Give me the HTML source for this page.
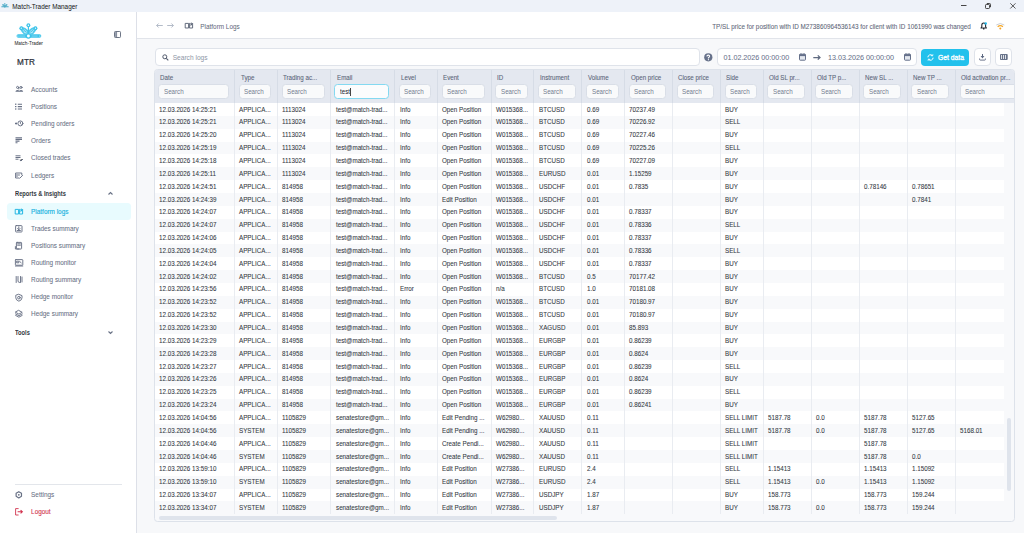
<!DOCTYPE html>
<html><head><meta charset="utf-8">
<style>
*{box-sizing:border-box;margin:0;padding:0}
html,body{width:1024px;height:533px;overflow:hidden;background:#f7f8fa;font-family:"Liberation Sans",sans-serif;color:#2a2f3a}
.abs{position:absolute}
#titlebar{position:absolute;left:0;top:0;width:1024px;height:12px;background:#eef2f9}
#ttext{position:absolute;left:12.3px;top:2.7px;font-size:6.4px;color:#151515;white-space:nowrap}
#sidebar{position:absolute;left:0;top:12px;width:137px;height:521px;background:#fff;border-right:1px solid #dde0e8}
.nav{position:absolute;left:31.1px;font-size:6.4px;color:#5b6477;white-space:nowrap;line-height:8px;margin-top:0.7px;-webkit-text-stroke:0.05px #5b6477}
.navi{position:absolute;left:15.8px;width:8.5px;height:8px}
.sec{position:absolute;left:15.4px;font-size:6.4px;transform:scaleX(0.895);transform-origin:0 0;font-weight:bold;color:#34373d;white-space:nowrap;line-height:8px}
#active{position:absolute;left:7.1px;top:190.8px;width:123.6px;height:16.9px;background:#e8fbfe;border-radius:3.5px}
#header{position:absolute;left:137px;top:12px;width:887px;height:26.5px;background:#fff;border-bottom:1px solid #e1e4ea}
.htext{position:absolute;font-size:6.4px;color:#5d6678;white-space:nowrap;line-height:8px}
.box{position:absolute;background:#fff;border:1px solid #dfe3ea;border-radius:4px}
#tbl{position:absolute;background:#f8f9fb;border:1px solid #dde2ea;border-radius:3.5px;overflow:hidden}
#thead{position:absolute;left:0;top:0;width:100%;background:#e4e8f0}
.th{position:absolute;top:0;height:100%}
.hl{position:absolute;left:6px;top:4.3px;font-size:6.8px;color:#5a6579;-webkit-text-stroke:0.08px #5a6579;white-space:nowrap;line-height:7px}
.hi{position:absolute;left:4.2px;top:14.6px;height:14.5px;background:#f9fafb;border:1px solid #d9dee7;border-radius:3.5px;font-size:6.9px;color:#737d90;padding-left:4.4px;line-height:12.5px;padding-top:0.9px;white-space:nowrap}
.hi.focus{border:1.3px solid #84d9f1;background:#fbfcfd;color:#20242c;margin-left:-0.6px;margin-top:-0.6px;height:15.5px;padding-left:4.7px}
.ph{display:inline-block;transform:scaleX(0.9);transform-origin:0 50%}
.hs{display:inline-block;transform:scaleX(0.91);transform-origin:0 50%}
.caret{position:absolute;left:15.1px;top:2.9px;width:0.7px;height:8.3px;background:#444}
.hvl{position:absolute;top:0;width:1px;height:100%;background:#d6dce6}
#tbody{position:absolute;left:0;width:100%;overflow:hidden}
.tr{position:absolute;left:0;width:849.7px;height:12.85px;background:#fff}
.tr.alt{background:#f8f9fb}
.td{position:absolute;top:2.5px;font-size:6.7px;color:#343944;white-space:nowrap;line-height:7.4px;transform:scaleX(0.935);transform-origin:0 0;-webkit-text-stroke:0.07px #343944}
.vl{position:absolute;top:0;width:1px;height:100%;background:#e9ecf1}
#gutter{position:absolute;width:12px;background:#f8f9fb}
#hthumb{position:absolute;height:4px;background:#dfe4ec;border-radius:2px}
#vthumb{position:absolute;width:4px;background:#dfe4ec;border-radius:2px}
svg{position:absolute;overflow:visible}
</style></head><body>
<div id="titlebar">
 <svg style="left:1.3px;top:3.4px" width="8" height="5" viewBox="0 0 26 17"><g fill="#4aa9c6"><path d="M3.3 5.2 Q3.2 3.2 5.4 3.4 Q9 4.2 11.6 6.6 L13.2 6.6 Q15.8 4.2 19.4 3.4 Q21.6 3.2 21.5 5.2 Q21 8.3 17.6 11.6 L7.2 11.6 Q3.8 8.3 3.3 5.2 Z" opacity="0.85"/><rect x="0.3" y="11.2" width="25.4" height="3.6" rx="1.8"/><circle cx="12.4" cy="13" r="2.8"/><circle cx="12.4" cy="2.3" r="2"/><rect x="11.7" y="3" width="1.4" height="6"/></g></svg>
 <div id="ttext">Match-Trader Manager</div>
 <svg style="left:961px;top:5px" width="6" height="1"><rect x="0" y="0" width="5.5" height="0.9" fill="#333"/></svg>
 <svg style="left:985px;top:2.5px" width="6" height="6" viewBox="0 0 6 6"><rect x="0.5" y="1.5" width="4" height="4" rx="0.8" fill="none" stroke="#333" stroke-width="0.9"/><path d="M1.8 0.5 H4.6 Q5.5 0.5 5.5 1.4 V4.2" fill="none" stroke="#333" stroke-width="0.9"/></svg>
 <svg style="left:1009.6px;top:2.5px" width="6" height="6" viewBox="0 0 6 6"><path d="M0.3 0.3 L5.5 5.5 M5.5 0.3 L0.3 5.5" stroke="#333" stroke-width="0.8"/></svg>
</div>
<div id="sidebar">
 <!-- logo crown -->
 <svg style="left:16px;top:10.5px" width="26" height="17" viewBox="0 0 26 17">
  <g fill="#3ec4ea">
   <path d="M3.6 5.8 Q5.5 9 8 11.4 H16.8 Q19.3 9 21.2 5.8 L19.4 3.6 Q15 4.6 12.4 7.4 Q9.8 4.6 5.4 3.6 Z" opacity="0.9"/>
   <rect x="0.5" y="11.2" width="24.8" height="3.6" rx="1.8"/>
   <circle cx="12.4" cy="13" r="2.7"/>
   <circle cx="12.4" cy="2.3" r="1.95"/>
   <rect x="11.8" y="3.5" width="1.2" height="8"/>
   <circle cx="5.3" cy="5.2" r="1.9"/><circle cx="19.5" cy="5.2" r="1.9"/>
  </g>
  <g fill="#fff">
   <circle cx="12.4" cy="13" r="1.45"/>
   <circle cx="12.4" cy="2.3" r="0.7"/>
   <circle cx="5.3" cy="5.2" r="0.6"/><circle cx="19.5" cy="5.2" r="0.6"/>
   <rect x="3.2" y="12.8" width="6" height="0.45" opacity="0.75"/>
   <rect x="15.6" y="12.8" width="6" height="0.45" opacity="0.75"/>
   <circle cx="1.9" cy="13" r="0.55"/><circle cx="23.9" cy="13" r="0.55"/>
  </g>
  <path d="M6.8 6.8 L9.6 10.4 M18 6.8 L15.2 10.4 M8.2 6.4 L11 8.8 M16.6 6.4 L13.8 8.8 M7.8 9 L11.2 10.2 M17 9 L13.6 10.2" stroke="#fff" stroke-width="0.5" fill="none" opacity="0.85"/>
 </svg>
 <div class="abs" style="left:14.4px;top:28.8px;font-size:4.7px;color:#333;-webkit-text-stroke:0.05px #333;white-space:nowrap;letter-spacing:0.05px">Match-Trader</div>
 <svg style="left:113.7px;top:18.5px" width="7" height="7" viewBox="0 0 7 7"><rect x="0.5" y="0.5" width="6" height="6" rx="0.8" fill="none" stroke="#5d6678" stroke-width="0.9"/><rect x="1" y="1" width="1.4" height="5" fill="#9aa2b1"/><path d="M2.6 0.8 V6.2" stroke="#5d6678" stroke-width="0.7"/></svg>
 <div class="abs" style="left:17.1px;top:46.1px;font-size:8.2px;color:#2b2f38;-webkit-text-stroke:0.2px #2b2f38;white-space:nowrap">MTR</div>
 <div id="active"></div>
 <svg style="left:15.4px;top:74.00px" width="8" height="8" viewBox="0 0 8 8"><circle cx="2.6" cy="1.4" r="1.05" stroke="#687185" stroke-width="0.95" fill="none" stroke-linecap="round" stroke-linejoin="round"/><circle cx="6" cy="1.4" r="1.05" stroke="#687185" stroke-width="0.95" fill="none" stroke-linecap="round" stroke-linejoin="round"/><path d="M3.8 1.4 V3" stroke="#687185" stroke-width="0.95" fill="none" stroke-linecap="round" stroke-linejoin="round"/><path d="M0.4 5.8 Q0.6 4 2.5 4 Q3.6 4 4.3 4.8 Q5 4 6.1 4 Q8 4 8.2 5.8 Z" fill="#687185"/></svg>
<div class="nav" style="top:73.30px;color:#687185">Accounts</div>
<svg style="left:15.4px;top:91.30px" width="8" height="8" viewBox="0 0 8 8"><rect x="0" y="0.6" width="1.4" height="1.2" fill="#687185"/><rect x="0" y="3" width="1.4" height="1.2" fill="#687185"/><rect x="0" y="5.4" width="1.4" height="1.2" fill="#687185"/><path d="M2.8 1.2 H7 M2.8 3.6 H7 M2.8 6 H7" stroke="#687185" stroke-width="1.1"/></svg>
<div class="nav" style="top:90.60px;color:#687185">Positions</div>
<svg style="left:15.4px;top:108.20px" width="8" height="8" viewBox="0 0 8 8"><circle cx="5.4" cy="3.4" r="2.5" stroke="#687185" stroke-width="0.95" fill="none" stroke-linecap="round" stroke-linejoin="round"/><path d="M5.4 2.1 V3.5 L6.3 4.3" stroke="#687185" stroke-width="0.95" fill="none" stroke-linecap="round" stroke-linejoin="round"/><path d="M0 3.5 H2.1 M1.1 2.4 V4.6" stroke="#687185" stroke-width="1"/></svg>
<div class="nav" style="top:107.50px;color:#687185">Pending orders</div>
<svg style="left:15.4px;top:125.40px" width="8" height="8" viewBox="0 0 8 8"><path d="M0.5 0.7 H7 M0.5 2.4 H7 M0.5 4.1 H4.5 M0.5 5.8 H2.5" stroke="#687185" stroke-width="1.1"/></svg>
<div class="nav" style="top:124.70px;color:#687185">Orders</div>
<svg style="left:15.4px;top:142.50px" width="8" height="8" viewBox="0 0 8 8"><path d="M0.5 0.8 H5.5 M0.5 2.5 H5.5 M0.5 4.2 H3.5 M4.8 5 L6 6 L8 4" stroke="#687185" stroke-width="1"/></svg>
<div class="nav" style="top:141.80px;color:#687185">Closed trades</div>
<svg style="left:15.4px;top:159.70px" width="8" height="8" viewBox="0 0 8 8"><path d="M6.8 2.8 V1 H0.6 V6 H4" stroke="#687185" stroke-width="0.95" fill="none" stroke-linecap="round" stroke-linejoin="round"/><path d="M2 2.3 V4.6 M3.3 3 H4.5 M4.8 6.2 L7.6 3.4" stroke="#687185" stroke-width="0.95" fill="none" stroke-linecap="round" stroke-linejoin="round"/></svg>
<div class="nav" style="top:159.00px;color:#687185">Ledgers</div>
<svg style="left:15.4px;top:195.90px" width="8" height="8" viewBox="0 0 8 8"><path d="M0.6 1.4 H3.6 V6 H0.6 Z" stroke="#1cb3e2" stroke-width="0.95" fill="none" stroke-linecap="round" stroke-linejoin="round"/><path d="M5.3 1.4 H4.4 V6 H7.6 V1.4" stroke="#1cb3e2" stroke-width="0.95" fill="none" stroke-linecap="round" stroke-linejoin="round"/><path d="M6.7 0 L5.5 2.4 L5.5 4.6 L7 2.6 Z" fill="#1cb3e2"/></svg>
<div class="nav" style="top:195.20px;color:#1cb3e2;-webkit-text-stroke:0.16px #1fb5e0">Platform logs</div>
<svg style="left:15.4px;top:213.00px" width="8" height="8" viewBox="0 0 8 8"><rect x="0.6" y="0.6" width="6.4" height="6.4" rx="0.6" stroke="#687185" stroke-width="0.95" fill="none" stroke-linecap="round" stroke-linejoin="round"/><path d="M3.8 1.8 V4.6 M2.6 3.6 L3.8 4.8 L5 3.6 M2.2 5.5 H5.4" stroke="#687185" stroke-width="0.95" fill="none" stroke-linecap="round" stroke-linejoin="round"/></svg>
<div class="nav" style="top:212.30px;color:#687185">Trades summary</div>
<svg style="left:15.4px;top:230.10px" width="8" height="8" viewBox="0 0 8 8"><rect x="1.4" y="0.4" width="5.2" height="6.6" rx="0.6" stroke="#687185" stroke-width="0.95" fill="none" stroke-linecap="round" stroke-linejoin="round"/><path d="M2.6 1.8 H5.4 M2.6 3.2 H5.4 M0.4 4.6 V7 H4" stroke="#687185" stroke-width="0.95" fill="none" stroke-linecap="round" stroke-linejoin="round"/></svg>
<div class="nav" style="top:229.40px;color:#687185">Positions summary</div>
<svg style="left:15.4px;top:247.00px" width="8" height="8" viewBox="0 0 8 8"><rect x="0.4" y="0.6" width="7.4" height="5.6" rx="0.5" stroke="#687185" stroke-width="0.95" fill="none" stroke-linecap="round" stroke-linejoin="round"/><path d="M2 2.2 H3.8 V3.8 H2 Z M4.6 2.4 L6.2 3.8 M0.4 7 H7.8" stroke="#687185" stroke-width="0.95" fill="none" stroke-linecap="round" stroke-linejoin="round"/></svg>
<div class="nav" style="top:246.30px;color:#687185">Routing monitor</div>
<svg style="left:15.4px;top:264.40px" width="8" height="8" viewBox="0 0 8 8"><path d="M1.2 0.5 V6.5 M3 0.5 V5 Q3 6.5 4.5 6.5 M5.5 0.5 V6.5 M7 1 V6" stroke="#687185" stroke-width="0.95" fill="none" stroke-linecap="round" stroke-linejoin="round"/></svg>
<div class="nav" style="top:263.70px;color:#687185">Routing summary</div>
<svg style="left:15.4px;top:281.50px" width="8" height="8" viewBox="0 0 8 8"><path d="M3.9 0.4 L7 1.6 V3.8 Q7 6.2 3.9 7.2 Q0.8 6.2 0.8 3.8 V1.6 Z" stroke="#687185" stroke-width="0.95" fill="none" stroke-linecap="round" stroke-linejoin="round"/><circle cx="3.9" cy="3.7" r="1.3" stroke="#687185" stroke-width="0.95" fill="none" stroke-linecap="round" stroke-linejoin="round"/></svg>
<div class="nav" style="top:280.80px;color:#687185">Hedge monitor</div>
<svg style="left:15.4px;top:298.40px" width="8" height="8" viewBox="0 0 8 8"><path d="M3.9 0.5 L7.2 2.3 L3.9 4.1 L0.6 2.3 Z" stroke="#687185" stroke-width="0.95" fill="none" stroke-linecap="round" stroke-linejoin="round"/><path d="M0.6 3.9 L3.9 5.7 L7.2 3.9 M0.6 5.4 L3.9 7.2 L7.2 5.4" stroke="#687185" stroke-width="0.95" fill="none" stroke-linecap="round" stroke-linejoin="round"/></svg>
<div class="nav" style="top:297.70px;color:#687185">Hedge summary</div>
<svg style="left:15.4px;top:478.70px" width="8" height="8" viewBox="0 0 8 8"><circle cx="3.8" cy="3.8" r="0.9" fill="#687185"/><path d="M6.48 5.35 L3.80 6.90 L1.12 5.35 L1.12 2.25 L3.80 0.70 L6.48 2.25 Z" stroke="#687185" stroke-width="1.2" fill="none" stroke-linejoin="round"/></svg>
<div class="nav" style="top:478.00px;color:#687185">Settings</div>
<svg style="left:15.4px;top:495.80px" width="8" height="8" viewBox="0 0 8 8"><path d="M3.6 0.6 H0.6 V7 H3.6" stroke="#d2344f" stroke-width="0.9" fill="none"/><path d="M2.6 3.8 H7.2 M5.6 2.2 L7.3 3.8 L5.6 5.4" stroke="#d2344f" stroke-width="1.1" fill="none"/></svg>
<div class="nav" style="top:495.10px;color:#d2344f;-webkit-text-stroke:0.1px #d2344f">Logout</div>
<div class="sec" style="top:177.80px">Reports &amp; Insights</div>
<div class="sec" style="top:316.60px">Tools</div>
<svg style="left:108.4px;top:180.30px" width="5" height="3" viewBox="0 0 5 3"><path d="M0.5 2.5 L2.5 0.6 L4.5 2.5" stroke="#687185" stroke-width="1.1" fill="none"/></svg>
<svg style="left:108.4px;top:319.10px" width="5" height="3" viewBox="0 0 5 3"><path d="M0.5 0.5 L2.5 2.4 L4.5 0.5" stroke="#687185" stroke-width="1.1" fill="none"/></svg>
<div class="abs" style="left:15px;top:471.50px;width:107px;height:1px;background:#e3e6eb"></div>
</div>
<div id="header">
 <svg style="left:19.00px;top:11.40px" width="7" height="5" viewBox="0 0 7 5"><path d="M6.8 2.5 H0.6 M2.6 0.5 L0.6 2.5 L2.6 4.5" stroke="#b3bbc8" stroke-width="1" fill="none"/></svg>
<svg style="left:30.30px;top:11.40px" width="7" height="5" viewBox="0 0 7 5"><path d="M0.2 2.5 H6.4 M4.4 0.5 L6.4 2.5 L4.4 4.5" stroke="#b3bbc8" stroke-width="1" fill="none"/></svg>
<svg style="left:47.80px;top:10.40px" width="9" height="7" viewBox="0 0 9 7"><path d="M0.6 1.4 H3.6 V6 H0.6 Z" stroke="#5d6678" stroke-width="0.95" fill="none" stroke-linecap="round" stroke-linejoin="round"/><path d="M5.3 1.4 H4.4 V6 H7.6 V1.4" stroke="#5d6678" stroke-width="0.95" fill="none" stroke-linecap="round" stroke-linejoin="round"/><path d="M6.7 0 L5.5 2.4 L5.5 4.6 L7 2.6 Z" fill="#5d6678"/></svg>
<div class="htext" style="left:63.30px;top:11.20px">Platform Logs</div>
<div class="htext" style="right:53.20px;top:11.00px;font-size:6.33px;-webkit-text-stroke:0.06px #5d6678">TP/SL price for position with ID M273860964536143 for client with ID 1061990 was changed</div>
<svg style="left:842.80px;top:10.20px" width="8" height="8" viewBox="0 0 8 8"><path d="M1 6 H6.4 L5.6 4.8 V3.2 Q5.6 1 3.7 1 Q1.8 1 1.8 3.2 V4.8 Z M3 7 H4.4" stroke="#262a33" stroke-width="1.1" fill="none" stroke-linejoin="round"/><circle cx="5.7" cy="1.4" r="1.25" fill="#22b8e8"/></svg>
<svg style="left:858.80px;top:11.00px" width="9" height="7" viewBox="0 0 9 7"><path d="M0.3 2 Q4.3 -1 8.3 2" stroke="#c9ced6" stroke-width="1" fill="none"/><path d="M1.7 3.7 Q4.3 1.6 6.9 3.7" stroke="#f6a623" stroke-width="1.3" fill="none"/><circle cx="4.3" cy="5.6" r="1" fill="#f6a623"/></svg>
</div>
<div class="box" style="left:155.3px;top:48.3px;width:544.9px;height:17.4px"></div>
<svg style="left:161.5px;top:54.2px" width="7" height="7" viewBox="0 0 7 7"><circle cx="2.8" cy="2.8" r="2" stroke="#4f586b" stroke-width="1" fill="none"/><path d="M4.3 4.3 L6.3 6.3" stroke="#4f586b" stroke-width="1.1"/></svg>
<div class="htext" style="left:172.7px;top:53.7px;color:#8d96a6;font-size:6.6px">Search logs</div>
<svg style="left:704.2px;top:52.8px" width="9" height="9" viewBox="0 0 9 9"><circle cx="4.3" cy="4.3" r="4.1" fill="#66718a"/><path d="M3 3.4 Q3 2.1 4.3 2.1 Q5.6 2.1 5.6 3.3 Q5.6 4.1 4.4 4.7 V5.4" stroke="#fff" stroke-width="1.05" fill="none"/><circle cx="4.4" cy="6.7" r="0.6" fill="#fff"/></svg>
<div class="box" style="left:717.1px;top:48.3px;width:200px;height:17.4px"></div>
<div class="htext" style="left:723.4px;top:53.5px;color:#66708a;font-size:7.2px;-webkit-text-stroke:0.04px #66708a">01.02.2026 00:00:00</div>
<div class="htext" style="left:828px;top:53.5px;color:#66708a;font-size:7.2px;-webkit-text-stroke:0.04px #66708a">13.03.2026 00:00:00</div>
<svg style="left:798.9px;top:53.0px" width="7" height="8" viewBox="0 0 7 8"><rect x="0.5" y="1.2" width="6" height="6" rx="0.7" stroke="#65708a" stroke-width="1" fill="#e3e7ee"/><rect x="0.5" y="1.2" width="6" height="1.9" fill="#65708a"/><path d="M2 0.2 V1.5 M5 0.2 V1.5" stroke="#65708a" stroke-width="0.8"/></svg>
<svg style="left:903.9px;top:53.0px" width="7" height="8" viewBox="0 0 7 8"><rect x="0.5" y="1.2" width="6" height="6" rx="0.7" stroke="#65708a" stroke-width="1" fill="#e3e7ee"/><rect x="0.5" y="1.2" width="6" height="1.9" fill="#65708a"/><path d="M2 0.2 V1.5 M5 0.2 V1.5" stroke="#65708a" stroke-width="0.8"/></svg>
<svg style="left:813.2px;top:55px" width="8" height="5" viewBox="0 0 8 5"><path d="M0.3 2.5 H7 M4.8 0.4 L7 2.5 L4.8 4.6" stroke="#5f6a80" stroke-width="1.25" fill="none"/></svg>
<div class="abs" style="left:920.9px;top:48.5px;width:48.6px;height:17.3px;background:#22c1ec;border-radius:4px"></div>
<svg style="left:927.2px;top:54px" width="7" height="7" viewBox="0 0 7 7"><path d="M0.9 3.3 A2.6 2.6 0 0 1 5.3 1.5 M6.1 3.7 A2.6 2.6 0 0 1 1.7 5.5" stroke="#fff" stroke-width="1" fill="none"/><path d="M5.9 0.3 L5.6 1.9 L4 1.6 M1.1 6.7 L1.4 5.1 L3 5.4" stroke="#fff" stroke-width="0.85" fill="none"/></svg>
<div class="htext" style="left:938.4px;top:53.9px;color:#fff;font-size:7px;-webkit-text-stroke:0.3px #fff;transform:scaleX(0.965);transform-origin:0 0">Get data</div>
<div class="box" style="left:974.1px;top:48.3px;width:16.5px;height:17.4px"></div>
<svg style="left:979px;top:53.9px" width="7" height="7" viewBox="0 0 7 7"><rect x="3" y="0" width="1" height="2.6" fill="#5b6780"/><path d="M1.6 2.1 H5.4 L3.5 4.4 Z" fill="#5b6780"/><path d="M0.6 4.5 V5.5 Q0.6 6.1 1.2 6.1 H5.8 Q6.4 6.1 6.4 5.5 V4.5" stroke="#5b6780" stroke-width="0.9" fill="none"/></svg>
<div class="box" style="left:995.4px;top:48.3px;width:16.5px;height:17.4px"></div>
<svg style="left:1000px;top:54px" width="8" height="6" viewBox="0 0 8 6"><rect x="0" y="0" width="7.7" height="6" rx="0.9" fill="#68738a"/><path d="M1.5 1 V5 M3.5 1 V5 M5.5 1 V5" stroke="#fff" stroke-width="0.8"/></svg>
<div id="tbl" style="left:153.80px;top:68.70px;width:861.40px;height:453.50px">
<div id="thead" style="height:33.40px"><div class="th" style="left:-0.50px;width:80.30px"><div class="hl"><span class="hs">Date</span></div><div class="hi" style="width:70.10px"><span class="ph">Search</span></div></div><div class="th" style="left:79.80px;width:42.80px"><div class="hl"><span class="hs">Type</span></div><div class="hi" style="width:32.60px"><span class="ph">Search</span></div></div><div class="th" style="left:122.60px;width:53.30px"><div class="hl"><span class="hs">Trading ac...</span></div><div class="hi" style="width:43.10px"><span class="ph">Search</span></div></div><div class="th" style="left:175.90px;width:64.10px"><div class="hl"><span class="hs">Email</span></div><div class="hi focus" style="width:55.10px"><span class="ph tv">test</span><span class="caret"></span></div></div><div class="th" style="left:240.00px;width:42.60px"><div class="hl"><span class="hs">Level</span></div><div class="hi" style="width:32.40px"><span class="ph">Search</span></div></div><div class="th" style="left:282.60px;width:53.80px"><div class="hl"><span class="hs">Event</span></div><div class="hi" style="width:43.60px"><span class="ph">Search</span></div></div><div class="th" style="left:336.40px;width:42.50px"><div class="hl"><span class="hs">ID</span></div><div class="hi" style="width:32.30px"><span class="ph">Search</span></div></div><div class="th" style="left:378.90px;width:48.30px"><div class="hl"><span class="hs">Instrument</span></div><div class="hi" style="width:38.10px"><span class="ph">Search</span></div></div><div class="th" style="left:427.20px;width:42.60px"><div class="hl"><span class="hs">Volume</span></div><div class="hi" style="width:32.40px"><span class="ph">Search</span></div></div><div class="th" style="left:469.80px;width:47.90px"><div class="hl"><span class="hs">Open price</span></div><div class="hi" style="width:37.70px"><span class="ph">Search</span></div></div><div class="th" style="left:517.70px;width:47.90px"><div class="hl"><span class="hs">Close price</span></div><div class="hi" style="width:37.70px"><span class="ph">Search</span></div></div><div class="th" style="left:565.60px;width:42.90px"><div class="hl"><span class="hs">Side</span></div><div class="hi" style="width:32.70px"><span class="ph">Search</span></div></div><div class="th" style="left:608.50px;width:48.00px"><div class="hl"><span class="hs">Old SL pr...</span></div><div class="hi" style="width:37.80px"><span class="ph">Search</span></div></div><div class="th" style="left:656.50px;width:48.00px"><div class="hl"><span class="hs">Old TP p...</span></div><div class="hi" style="width:37.80px"><span class="ph">Search</span></div></div><div class="th" style="left:704.50px;width:48.00px"><div class="hl"><span class="hs">New SL ...</span></div><div class="hi" style="width:37.80px"><span class="ph">Search</span></div></div><div class="th" style="left:752.50px;width:48.10px"><div class="hl"><span class="hs">New TP ...</span></div><div class="hi" style="width:37.90px"><span class="ph">Search</span></div></div><div class="th" style="left:800.60px;width:84.60px"><div class="hl"><span class="hs">Old activation pr...</span></div><div class="hi" style="width:74.40px"><span class="ph">Search</span></div></div><div class="hvl" style="left:79.30px"></div><div class="hvl" style="left:122.10px"></div><div class="hvl" style="left:175.40px"></div><div class="hvl" style="left:239.50px"></div><div class="hvl" style="left:282.10px"></div><div class="hvl" style="left:335.90px"></div><div class="hvl" style="left:378.40px"></div><div class="hvl" style="left:426.70px"></div><div class="hvl" style="left:469.30px"></div><div class="hvl" style="left:517.20px"></div><div class="hvl" style="left:565.10px"></div><div class="hvl" style="left:608.00px"></div><div class="hvl" style="left:656.00px"></div><div class="hvl" style="left:704.00px"></div><div class="hvl" style="left:752.00px"></div><div class="hvl" style="left:800.10px"></div></div>
<div id="tbody" style="top:33.40px;height:411.20px"><div class="tr" style="top:0.00px"><span class="td" style="left:4.40px">12.03.2026 14:25:21</span><span class="td" style="left:84.70px">APPLICA...</span><span class="td" style="left:127.50px">1113024</span><span class="td" style="left:180.80px">test@match-trad...</span><span class="td" style="left:244.90px">Info</span><span class="td" style="left:287.50px">Open Position</span><span class="td" style="left:341.30px">W015368...</span><span class="td" style="left:383.80px">BTCUSD</span><span class="td" style="left:432.10px">0.69</span><span class="td" style="left:474.70px">70237.49</span><span class="td" style="left:570.50px">BUY</span></div><div class="tr alt" style="top:12.85px"><span class="td" style="left:4.40px">12.03.2026 14:25:21</span><span class="td" style="left:84.70px">APPLICA...</span><span class="td" style="left:127.50px">1113024</span><span class="td" style="left:180.80px">test@match-trad...</span><span class="td" style="left:244.90px">Info</span><span class="td" style="left:287.50px">Open Position</span><span class="td" style="left:341.30px">W015368...</span><span class="td" style="left:383.80px">BTCUSD</span><span class="td" style="left:432.10px">0.69</span><span class="td" style="left:474.70px">70226.92</span><span class="td" style="left:570.50px">SELL</span></div><div class="tr" style="top:25.70px"><span class="td" style="left:4.40px">12.03.2026 14:25:20</span><span class="td" style="left:84.70px">APPLICA...</span><span class="td" style="left:127.50px">1113024</span><span class="td" style="left:180.80px">test@match-trad...</span><span class="td" style="left:244.90px">Info</span><span class="td" style="left:287.50px">Open Position</span><span class="td" style="left:341.30px">W015368...</span><span class="td" style="left:383.80px">BTCUSD</span><span class="td" style="left:432.10px">0.69</span><span class="td" style="left:474.70px">70227.46</span><span class="td" style="left:570.50px">BUY</span></div><div class="tr alt" style="top:38.55px"><span class="td" style="left:4.40px">12.03.2026 14:25:19</span><span class="td" style="left:84.70px">APPLICA...</span><span class="td" style="left:127.50px">1113024</span><span class="td" style="left:180.80px">test@match-trad...</span><span class="td" style="left:244.90px">Info</span><span class="td" style="left:287.50px">Open Position</span><span class="td" style="left:341.30px">W015368...</span><span class="td" style="left:383.80px">BTCUSD</span><span class="td" style="left:432.10px">0.69</span><span class="td" style="left:474.70px">70225.26</span><span class="td" style="left:570.50px">SELL</span></div><div class="tr" style="top:51.40px"><span class="td" style="left:4.40px">12.03.2026 14:25:18</span><span class="td" style="left:84.70px">APPLICA...</span><span class="td" style="left:127.50px">1113024</span><span class="td" style="left:180.80px">test@match-trad...</span><span class="td" style="left:244.90px">Info</span><span class="td" style="left:287.50px">Open Position</span><span class="td" style="left:341.30px">W015368...</span><span class="td" style="left:383.80px">BTCUSD</span><span class="td" style="left:432.10px">0.69</span><span class="td" style="left:474.70px">70227.09</span><span class="td" style="left:570.50px">BUY</span></div><div class="tr alt" style="top:64.25px"><span class="td" style="left:4.40px">12.03.2026 14:25:11</span><span class="td" style="left:84.70px">APPLICA...</span><span class="td" style="left:127.50px">1113024</span><span class="td" style="left:180.80px">test@match-trad...</span><span class="td" style="left:244.90px">Info</span><span class="td" style="left:287.50px">Open Position</span><span class="td" style="left:341.30px">W015368...</span><span class="td" style="left:383.80px">EURUSD</span><span class="td" style="left:432.10px">0.01</span><span class="td" style="left:474.70px">1.15259</span><span class="td" style="left:570.50px">BUY</span></div><div class="tr" style="top:77.10px"><span class="td" style="left:4.40px">12.03.2026 14:24:51</span><span class="td" style="left:84.70px">APPLICA...</span><span class="td" style="left:127.50px">814958</span><span class="td" style="left:180.80px">test@match-trad...</span><span class="td" style="left:244.90px">Info</span><span class="td" style="left:287.50px">Open Position</span><span class="td" style="left:341.30px">W015368...</span><span class="td" style="left:383.80px">USDCHF</span><span class="td" style="left:432.10px">0.01</span><span class="td" style="left:474.70px">0.7835</span><span class="td" style="left:570.50px">BUY</span><span class="td" style="left:709.40px">0.78146</span><span class="td" style="left:757.40px">0.78651</span></div><div class="tr alt" style="top:89.95px"><span class="td" style="left:4.40px">12.03.2026 14:24:39</span><span class="td" style="left:84.70px">APPLICA...</span><span class="td" style="left:127.50px">814958</span><span class="td" style="left:180.80px">test@match-trad...</span><span class="td" style="left:244.90px">Info</span><span class="td" style="left:287.50px">Edit Position</span><span class="td" style="left:341.30px">W015368...</span><span class="td" style="left:383.80px">USDCHF</span><span class="td" style="left:432.10px">0.01</span><span class="td" style="left:570.50px">BUY</span><span class="td" style="left:757.40px">0.7841</span></div><div class="tr" style="top:102.80px"><span class="td" style="left:4.40px">12.03.2026 14:24:07</span><span class="td" style="left:84.70px">APPLICA...</span><span class="td" style="left:127.50px">814958</span><span class="td" style="left:180.80px">test@match-trad...</span><span class="td" style="left:244.90px">Info</span><span class="td" style="left:287.50px">Open Position</span><span class="td" style="left:341.30px">W015368...</span><span class="td" style="left:383.80px">USDCHF</span><span class="td" style="left:432.10px">0.01</span><span class="td" style="left:474.70px">0.78337</span><span class="td" style="left:570.50px">BUY</span></div><div class="tr alt" style="top:115.65px"><span class="td" style="left:4.40px">12.03.2026 14:24:07</span><span class="td" style="left:84.70px">APPLICA...</span><span class="td" style="left:127.50px">814958</span><span class="td" style="left:180.80px">test@match-trad...</span><span class="td" style="left:244.90px">Info</span><span class="td" style="left:287.50px">Open Position</span><span class="td" style="left:341.30px">W015368...</span><span class="td" style="left:383.80px">USDCHF</span><span class="td" style="left:432.10px">0.01</span><span class="td" style="left:474.70px">0.78336</span><span class="td" style="left:570.50px">SELL</span></div><div class="tr" style="top:128.50px"><span class="td" style="left:4.40px">12.03.2026 14:24:06</span><span class="td" style="left:84.70px">APPLICA...</span><span class="td" style="left:127.50px">814958</span><span class="td" style="left:180.80px">test@match-trad...</span><span class="td" style="left:244.90px">Info</span><span class="td" style="left:287.50px">Open Position</span><span class="td" style="left:341.30px">W015368...</span><span class="td" style="left:383.80px">USDCHF</span><span class="td" style="left:432.10px">0.01</span><span class="td" style="left:474.70px">0.78337</span><span class="td" style="left:570.50px">BUY</span></div><div class="tr alt" style="top:141.35px"><span class="td" style="left:4.40px">12.03.2026 14:24:05</span><span class="td" style="left:84.70px">APPLICA...</span><span class="td" style="left:127.50px">814958</span><span class="td" style="left:180.80px">test@match-trad...</span><span class="td" style="left:244.90px">Info</span><span class="td" style="left:287.50px">Open Position</span><span class="td" style="left:341.30px">W015368...</span><span class="td" style="left:383.80px">USDCHF</span><span class="td" style="left:432.10px">0.01</span><span class="td" style="left:474.70px">0.78336</span><span class="td" style="left:570.50px">SELL</span></div><div class="tr" style="top:154.20px"><span class="td" style="left:4.40px">12.03.2026 14:24:04</span><span class="td" style="left:84.70px">APPLICA...</span><span class="td" style="left:127.50px">814958</span><span class="td" style="left:180.80px">test@match-trad...</span><span class="td" style="left:244.90px">Info</span><span class="td" style="left:287.50px">Open Position</span><span class="td" style="left:341.30px">W015368...</span><span class="td" style="left:383.80px">USDCHF</span><span class="td" style="left:432.10px">0.01</span><span class="td" style="left:474.70px">0.78337</span><span class="td" style="left:570.50px">BUY</span></div><div class="tr alt" style="top:167.05px"><span class="td" style="left:4.40px">12.03.2026 14:24:02</span><span class="td" style="left:84.70px">APPLICA...</span><span class="td" style="left:127.50px">814958</span><span class="td" style="left:180.80px">test@match-trad...</span><span class="td" style="left:244.90px">Info</span><span class="td" style="left:287.50px">Open Position</span><span class="td" style="left:341.30px">W015368...</span><span class="td" style="left:383.80px">BTCUSD</span><span class="td" style="left:432.10px">0.5</span><span class="td" style="left:474.70px">70177.42</span><span class="td" style="left:570.50px">BUY</span></div><div class="tr" style="top:179.90px"><span class="td" style="left:4.40px">12.03.2026 14:23:56</span><span class="td" style="left:84.70px">APPLICA...</span><span class="td" style="left:127.50px">814958</span><span class="td" style="left:180.80px">test@match-trad...</span><span class="td" style="left:244.90px">Error</span><span class="td" style="left:287.50px">Open Position</span><span class="td" style="left:341.30px">n/a</span><span class="td" style="left:383.80px">BTCUSD</span><span class="td" style="left:432.10px">1.0</span><span class="td" style="left:474.70px">70181.08</span><span class="td" style="left:570.50px">BUY</span></div><div class="tr alt" style="top:192.75px"><span class="td" style="left:4.40px">12.03.2026 14:23:52</span><span class="td" style="left:84.70px">APPLICA...</span><span class="td" style="left:127.50px">814958</span><span class="td" style="left:180.80px">test@match-trad...</span><span class="td" style="left:244.90px">Info</span><span class="td" style="left:287.50px">Open Position</span><span class="td" style="left:341.30px">W015368...</span><span class="td" style="left:383.80px">BTCUSD</span><span class="td" style="left:432.10px">0.01</span><span class="td" style="left:474.70px">70180.97</span><span class="td" style="left:570.50px">BUY</span></div><div class="tr" style="top:205.60px"><span class="td" style="left:4.40px">12.03.2026 14:23:52</span><span class="td" style="left:84.70px">APPLICA...</span><span class="td" style="left:127.50px">814958</span><span class="td" style="left:180.80px">test@match-trad...</span><span class="td" style="left:244.90px">Info</span><span class="td" style="left:287.50px">Open Position</span><span class="td" style="left:341.30px">W015368...</span><span class="td" style="left:383.80px">BTCUSD</span><span class="td" style="left:432.10px">0.01</span><span class="td" style="left:474.70px">70180.97</span><span class="td" style="left:570.50px">BUY</span></div><div class="tr alt" style="top:218.45px"><span class="td" style="left:4.40px">12.03.2026 14:23:30</span><span class="td" style="left:84.70px">APPLICA...</span><span class="td" style="left:127.50px">814958</span><span class="td" style="left:180.80px">test@match-trad...</span><span class="td" style="left:244.90px">Info</span><span class="td" style="left:287.50px">Open Position</span><span class="td" style="left:341.30px">W015368...</span><span class="td" style="left:383.80px">XAGUSD</span><span class="td" style="left:432.10px">0.01</span><span class="td" style="left:474.70px">85.893</span><span class="td" style="left:570.50px">BUY</span></div><div class="tr" style="top:231.30px"><span class="td" style="left:4.40px">12.03.2026 14:23:29</span><span class="td" style="left:84.70px">APPLICA...</span><span class="td" style="left:127.50px">814958</span><span class="td" style="left:180.80px">test@match-trad...</span><span class="td" style="left:244.90px">Info</span><span class="td" style="left:287.50px">Open Position</span><span class="td" style="left:341.30px">W015368...</span><span class="td" style="left:383.80px">EURGBP</span><span class="td" style="left:432.10px">0.01</span><span class="td" style="left:474.70px">0.86239</span><span class="td" style="left:570.50px">BUY</span></div><div class="tr alt" style="top:244.15px"><span class="td" style="left:4.40px">12.03.2026 14:23:28</span><span class="td" style="left:84.70px">APPLICA...</span><span class="td" style="left:127.50px">814958</span><span class="td" style="left:180.80px">test@match-trad...</span><span class="td" style="left:244.90px">Info</span><span class="td" style="left:287.50px">Open Position</span><span class="td" style="left:341.30px">W015368...</span><span class="td" style="left:383.80px">EURGBP</span><span class="td" style="left:432.10px">0.01</span><span class="td" style="left:474.70px">0.8624</span><span class="td" style="left:570.50px">BUY</span></div><div class="tr" style="top:257.00px"><span class="td" style="left:4.40px">12.03.2026 14:23:27</span><span class="td" style="left:84.70px">APPLICA...</span><span class="td" style="left:127.50px">814958</span><span class="td" style="left:180.80px">test@match-trad...</span><span class="td" style="left:244.90px">Info</span><span class="td" style="left:287.50px">Open Position</span><span class="td" style="left:341.30px">W015368...</span><span class="td" style="left:383.80px">EURGBP</span><span class="td" style="left:432.10px">0.01</span><span class="td" style="left:474.70px">0.86239</span><span class="td" style="left:570.50px">SELL</span></div><div class="tr alt" style="top:269.85px"><span class="td" style="left:4.40px">12.03.2026 14:23:26</span><span class="td" style="left:84.70px">APPLICA...</span><span class="td" style="left:127.50px">814958</span><span class="td" style="left:180.80px">test@match-trad...</span><span class="td" style="left:244.90px">Info</span><span class="td" style="left:287.50px">Open Position</span><span class="td" style="left:341.30px">W015368...</span><span class="td" style="left:383.80px">EURGBP</span><span class="td" style="left:432.10px">0.01</span><span class="td" style="left:474.70px">0.8624</span><span class="td" style="left:570.50px">BUY</span></div><div class="tr" style="top:282.70px"><span class="td" style="left:4.40px">12.03.2026 14:23:25</span><span class="td" style="left:84.70px">APPLICA...</span><span class="td" style="left:127.50px">814958</span><span class="td" style="left:180.80px">test@match-trad...</span><span class="td" style="left:244.90px">Info</span><span class="td" style="left:287.50px">Open Position</span><span class="td" style="left:341.30px">W015368...</span><span class="td" style="left:383.80px">EURGBP</span><span class="td" style="left:432.10px">0.01</span><span class="td" style="left:474.70px">0.86239</span><span class="td" style="left:570.50px">SELL</span></div><div class="tr alt" style="top:295.55px"><span class="td" style="left:4.40px">12.03.2026 14:23:24</span><span class="td" style="left:84.70px">APPLICA...</span><span class="td" style="left:127.50px">814958</span><span class="td" style="left:180.80px">test@match-trad...</span><span class="td" style="left:244.90px">Info</span><span class="td" style="left:287.50px">Open Position</span><span class="td" style="left:341.30px">W015368...</span><span class="td" style="left:383.80px">EURGBP</span><span class="td" style="left:432.10px">0.01</span><span class="td" style="left:474.70px">0.86241</span><span class="td" style="left:570.50px">BUY</span></div><div class="tr" style="top:308.40px"><span class="td" style="left:4.40px">12.03.2026 14:04:56</span><span class="td" style="left:84.70px">APPLICA...</span><span class="td" style="left:127.50px">1105829</span><span class="td" style="left:180.80px">senatestore@gm...</span><span class="td" style="left:244.90px">Info</span><span class="td" style="left:287.50px">Edit Pending ...</span><span class="td" style="left:341.30px">W62980...</span><span class="td" style="left:383.80px">XAUUSD</span><span class="td" style="left:432.10px">0.11</span><span class="td" style="left:570.50px">SELL LIMIT</span><span class="td" style="left:613.40px">5187.78</span><span class="td" style="left:661.40px">0.0</span><span class="td" style="left:709.40px">5187.78</span><span class="td" style="left:757.40px">5127.65</span></div><div class="tr alt" style="top:321.25px"><span class="td" style="left:4.40px">12.03.2026 14:04:56</span><span class="td" style="left:84.70px">SYSTEM</span><span class="td" style="left:127.50px">1105829</span><span class="td" style="left:180.80px">senatestore@gm...</span><span class="td" style="left:244.90px">Info</span><span class="td" style="left:287.50px">Edit Pending ...</span><span class="td" style="left:341.30px">W62980...</span><span class="td" style="left:383.80px">XAUUSD</span><span class="td" style="left:432.10px">0.11</span><span class="td" style="left:570.50px">SELL LIMIT</span><span class="td" style="left:613.40px">5187.78</span><span class="td" style="left:661.40px">0.0</span><span class="td" style="left:709.40px">5187.78</span><span class="td" style="left:757.40px">5127.65</span><span class="td" style="left:805.50px">5168.01</span></div><div class="tr" style="top:334.10px"><span class="td" style="left:4.40px">12.03.2026 14:04:46</span><span class="td" style="left:84.70px">APPLICA...</span><span class="td" style="left:127.50px">1105829</span><span class="td" style="left:180.80px">senatestore@gm...</span><span class="td" style="left:244.90px">Info</span><span class="td" style="left:287.50px">Create Pendi...</span><span class="td" style="left:341.30px">W62980...</span><span class="td" style="left:383.80px">XAUUSD</span><span class="td" style="left:432.10px">0.11</span><span class="td" style="left:570.50px">SELL LIMIT</span><span class="td" style="left:709.40px">5187.78</span></div><div class="tr alt" style="top:346.95px"><span class="td" style="left:4.40px">12.03.2026 14:04:46</span><span class="td" style="left:84.70px">SYSTEM</span><span class="td" style="left:127.50px">1105829</span><span class="td" style="left:180.80px">senatestore@gm...</span><span class="td" style="left:244.90px">Info</span><span class="td" style="left:287.50px">Create Pendi...</span><span class="td" style="left:341.30px">W62980...</span><span class="td" style="left:383.80px">XAUUSD</span><span class="td" style="left:432.10px">0.11</span><span class="td" style="left:570.50px">SELL LIMIT</span><span class="td" style="left:709.40px">5187.78</span><span class="td" style="left:757.40px">0.0</span></div><div class="tr" style="top:359.80px"><span class="td" style="left:4.40px">12.03.2026 13:59:10</span><span class="td" style="left:84.70px">APPLICA...</span><span class="td" style="left:127.50px">1105829</span><span class="td" style="left:180.80px">senatestore@gm...</span><span class="td" style="left:244.90px">Info</span><span class="td" style="left:287.50px">Edit Position</span><span class="td" style="left:341.30px">W27386...</span><span class="td" style="left:383.80px">EURUSD</span><span class="td" style="left:432.10px">2.4</span><span class="td" style="left:570.50px">SELL</span><span class="td" style="left:613.40px">1.15413</span><span class="td" style="left:709.40px">1.15413</span><span class="td" style="left:757.40px">1.15092</span></div><div class="tr alt" style="top:372.65px"><span class="td" style="left:4.40px">12.03.2026 13:59:10</span><span class="td" style="left:84.70px">SYSTEM</span><span class="td" style="left:127.50px">1105829</span><span class="td" style="left:180.80px">senatestore@gm...</span><span class="td" style="left:244.90px">Info</span><span class="td" style="left:287.50px">Edit Position</span><span class="td" style="left:341.30px">W27386...</span><span class="td" style="left:383.80px">EURUSD</span><span class="td" style="left:432.10px">2.4</span><span class="td" style="left:570.50px">SELL</span><span class="td" style="left:613.40px">1.15413</span><span class="td" style="left:661.40px">0.0</span><span class="td" style="left:709.40px">1.15413</span><span class="td" style="left:757.40px">1.15092</span></div><div class="tr" style="top:385.50px"><span class="td" style="left:4.40px">12.03.2026 13:34:07</span><span class="td" style="left:84.70px">APPLICA...</span><span class="td" style="left:127.50px">1105829</span><span class="td" style="left:180.80px">senatestore@gm...</span><span class="td" style="left:244.90px">Info</span><span class="td" style="left:287.50px">Edit Position</span><span class="td" style="left:341.30px">W27386...</span><span class="td" style="left:383.80px">USDJPY</span><span class="td" style="left:432.10px">1.87</span><span class="td" style="left:570.50px">BUY</span><span class="td" style="left:613.40px">158.773</span><span class="td" style="left:709.40px">158.773</span><span class="td" style="left:757.40px">159.244</span></div><div class="tr alt" style="top:398.35px"><span class="td" style="left:4.40px">12.03.2026 13:34:07</span><span class="td" style="left:84.70px">SYSTEM</span><span class="td" style="left:127.50px">1105829</span><span class="td" style="left:180.80px">senatestore@gm...</span><span class="td" style="left:244.90px">Info</span><span class="td" style="left:287.50px">Edit Position</span><span class="td" style="left:341.30px">W27386...</span><span class="td" style="left:383.80px">USDJPY</span><span class="td" style="left:432.10px">1.87</span><span class="td" style="left:570.50px">BUY</span><span class="td" style="left:613.40px">158.773</span><span class="td" style="left:661.40px">0.0</span><span class="td" style="left:709.40px">158.773</span><span class="td" style="left:757.40px">159.244</span></div><div class="vl" style="left:79.30px"></div><div class="vl" style="left:122.10px"></div><div class="vl" style="left:175.40px"></div><div class="vl" style="left:239.50px"></div><div class="vl" style="left:282.10px"></div><div class="vl" style="left:335.90px"></div><div class="vl" style="left:378.40px"></div><div class="vl" style="left:426.70px"></div><div class="vl" style="left:469.30px"></div><div class="vl" style="left:517.20px"></div><div class="vl" style="left:565.10px"></div><div class="vl" style="left:608.00px"></div><div class="vl" style="left:656.00px"></div><div class="vl" style="left:704.00px"></div><div class="vl" style="left:752.00px"></div><div class="vl" style="left:800.10px"></div></div>
<div id="gutter" style="top:33.40px;left:849.70px;height:411.20px"></div>
<div id="hthumb" style="left:4.70px;top:446.80px;width:397.70px"></div>
<div id="vthumb" style="left:852.70px;top:348.80px;height:73.00px"></div>
</div>
</body></html>
